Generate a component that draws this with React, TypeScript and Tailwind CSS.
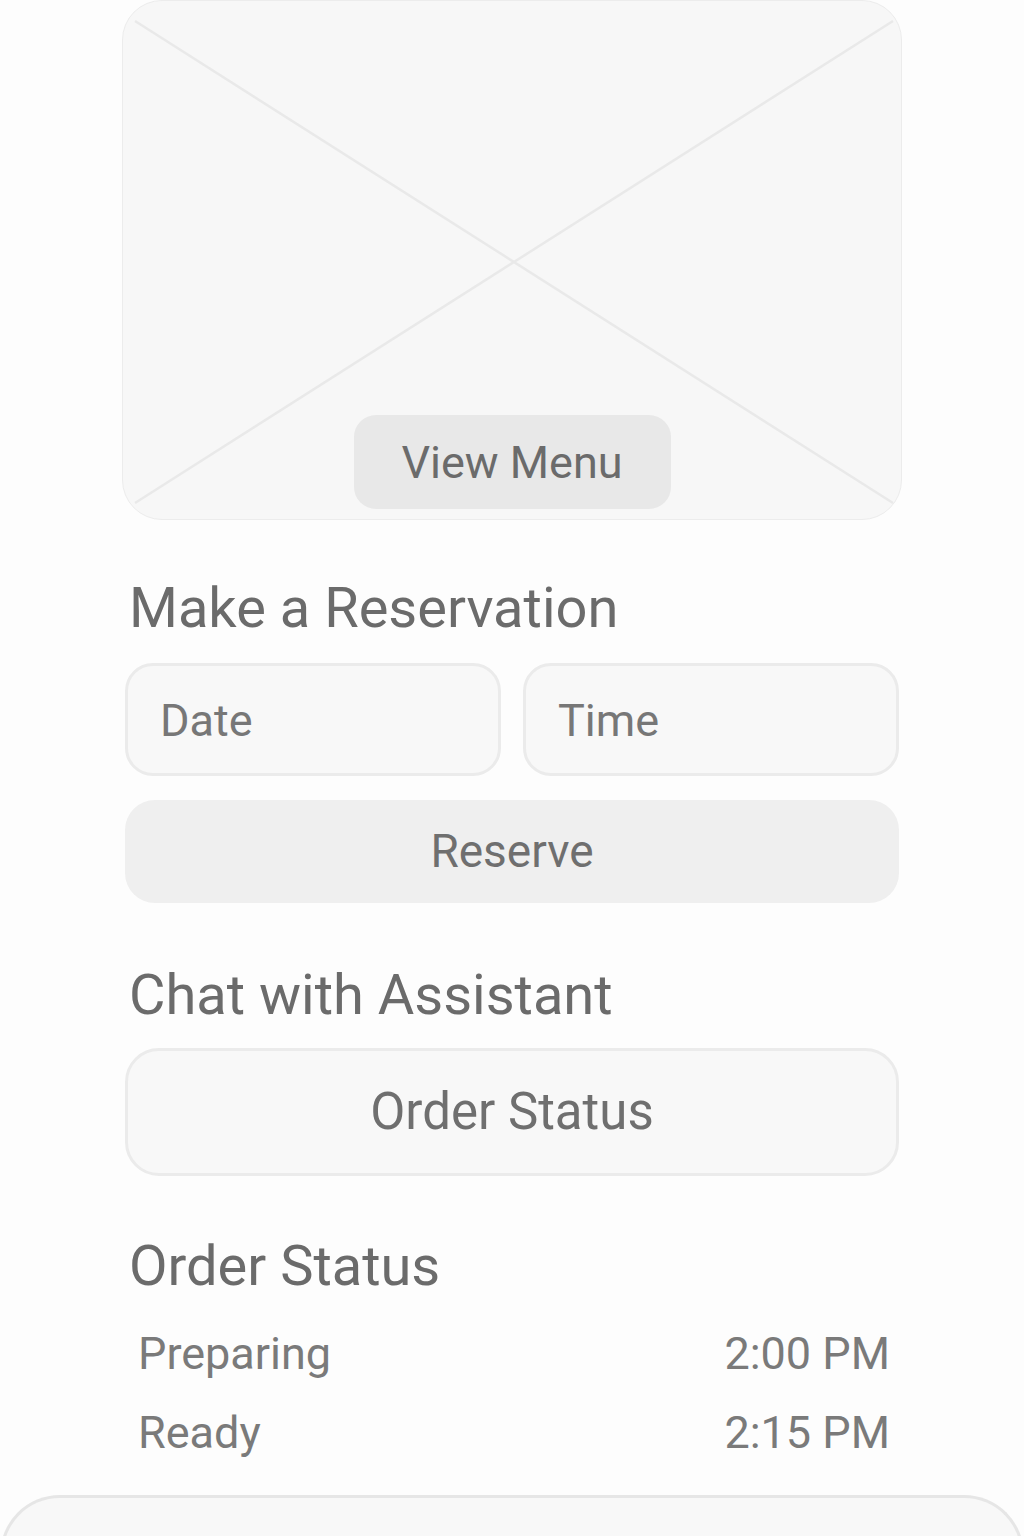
import React from "react";

const font = { fontFamily: "Roboto, 'Liberation Sans', sans-serif" };

export default function App() {
  return (
    <div className="h-[1536px] w-[1024px] bg-[#fdfdfd] overflow-hidden relative" style={font}>
      <div className="mx-auto w-[780px] flex flex-col">
        {/* Image placeholder */}
        <div className="relative h-[520px] rounded-[40px] bg-[#f7f7f7] border border-[#ececec] flex flex-col items-center justify-end pb-[10px]">
          <svg className="absolute inset-0" width="780" height="520" viewBox="0 0 780 520">
            <line x1="12" y1="20" x2="770" y2="502" stroke="#e9e9e9" strokeWidth="2.5" />
            <line x1="770" y1="20" x2="12" y2="502" stroke="#e9e9e9" strokeWidth="2.5" />
          </svg>
          <button className="relative w-[317px] h-[94px] rounded-[22px] bg-[#e8e8e8] text-[#6b6b6b] text-[45px] leading-none">
            View Menu
          </button>
        </div>

        {/* Reservation */}
        <h2 className="mt-[56px] ml-[7px] text-[56px] leading-[64px] text-[#6b6b6b]">Make a Reservation</h2>
        <div className="mt-[23px] mx-[3px] grid grid-cols-2 gap-[22px]">
          <div className="h-[113px] rounded-[28px] bg-[#f8f8f8] border-[3px] border-[#ebebeb] flex items-center pl-[32px] pt-[3px] text-[45px] text-[#777777]">
            Date
          </div>
          <div className="h-[113px] rounded-[28px] bg-[#f8f8f8] border-[3px] border-[#ebebeb] flex items-center pl-[32px] pt-[3px] text-[45px] text-[#777777]">
            Time
          </div>
        </div>
        <button className="mt-[24px] mx-[3px] h-[103px] rounded-[30px] bg-[#efefef] text-[46px] text-[#6f6f6f]">
          Reserve
        </button>

        {/* Chat */}
        <h2 className="mt-[60px] ml-[7px] text-[56px] leading-[64px] text-[#6b6b6b]">Chat with Assistant</h2>
        <button className="mt-[21px] mx-[3px] h-[128px] rounded-[34px] bg-[#f8f8f8] border-[3px] border-[#ebebeb] text-[51px] text-[#6f6f6f]">
          Order Status
        </button>

        {/* Order status */}
        <h2 className="mt-[58px] ml-[7px] text-[56px] leading-[64px] text-[#6b6b6b]">Order Status</h2>
        <div className="mt-[28px] ml-[16px] mr-[12px] flex flex-col gap-[23px] text-[45px] text-[#7a7a7a]">
          <div className="flex justify-between leading-[56px]">
            <span>Preparing</span>
            <span>2:00 PM</span>
          </div>
          <div className="flex justify-between leading-[56px]">
            <span>Ready</span>
            <span>2:15 PM</span>
          </div>
        </div>
      </div>

      {/* Bottom sheet */}
      <div className="mt-[34px] h-[60px] rounded-t-[64px] bg-[#f8f8f8] border-[3px] border-b-0 border-[#e6e6e6]" />
    </div>
  );
}
